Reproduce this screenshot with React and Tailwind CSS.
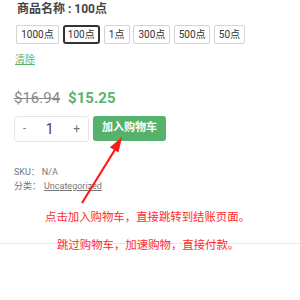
import React from 'react';

const options = [
  { label: '1000点', w: 43 },
  { label: '100点', w: 37, active: true },
  { label: '1点', w: 26 },
  { label: '300点', w: 37 },
  { label: '500点', w: 36 },
  { label: '50点', w: 31 },
];

function App() {
  return (
    <div
      className="relative w-[300px] h-[300px] bg-white overflow-hidden"
      style={{ fontFamily: 'Roboto, "Noto Sans CJK SC", sans-serif' }}
    >
      <div className="pl-[14px] pt-[1px]">
        {/* Product title */}
        <div className="pl-[3px] text-[12px] leading-[16px] font-bold text-[#444]">商品名称 : 100点</div>

        {/* Variation buttons */}
        <div className="mt-[8px] pl-[2px] flex gap-[3.8px]">
          {options.map((o) => (
            <div
              key={o.label}
              style={{ width: o.w }}
              className={
                o.active
                  ? 'h-[19px] flex items-center justify-center border-2 border-[#333] rounded-[3px] text-[10px] text-[#333] whitespace-nowrap'
                  : 'h-[19px] flex items-center justify-center border border-[#d4d4d4] rounded-[2px] text-[10px] text-[#333] whitespace-nowrap'
              }
            >
              {o.label}
            </div>
          ))}
        </div>

        <div className="mt-[9px] pl-[1px] text-[10px] leading-[14px] text-[#5bb36a] underline">清除</div>

        {/* Prices */}
        <div className="mt-[21px] flex items-center gap-[8px] leading-[20px] text-[15px]">
          <span className="text-[#8a8a8a] line-through">$16.94</span>
          <span className="text-[#5bb36a] font-bold">$15.25</span>
        </div>

        {/* Quantity + add to cart */}
        <div className="mt-[8px] flex gap-[4px]">
          <div className="w-[75px] h-[26px] border border-[#e6e6e6] rounded-[3px] flex items-center justify-between px-[8px] text-[#777]">
            <span className="text-[11px]">-</span>
            <span className="text-[14px] text-[#444]">1</span>
            <span className="text-[12px]">+</span>
          </div>
          <div className="w-[73px] h-[25px] bg-[#55b26a] rounded-[3px] flex items-center justify-center text-white text-[11px] font-semibold">
            加入购物车
          </div>
        </div>

        {/* Meta */}
        <div className="mt-[23px] text-[9px] leading-[14px] text-[#777]">
          <div>
            SKU：<span className="ml-[2px]">N/A</span>
          </div>
          <div>
            分类：<span className="ml-[3px] underline">Uncategorized</span>
          </div>
        </div>
      </div>

      <div className="mt-[50px] border-t border-[#e6eaee]" />

      {/* Annotation overlay */}
      <svg className="absolute left-0 top-0" width="300" height="300">
        <line x1="82" y1="203" x2="116" y2="148" stroke="#ff1a1a" strokeWidth="2.2" />
        <polygon points="122,137 118.5,152.5 109.9,147.3" fill="#ff1a1a" />
      </svg>
      <div className="absolute left-[45px] top-[209px] text-[11.4px] leading-[16px] text-[#ff2a2a] whitespace-nowrap">
        点击加入购物车，直接跳转到结账页面。
      </div>
      <div className="absolute left-[57px] top-[237px] text-[11.4px] leading-[16px] text-[#ff2a2a] whitespace-nowrap">
        跳过购物车，加速购物，直接付款。
      </div>
    </div>
  );
}

export default App;
